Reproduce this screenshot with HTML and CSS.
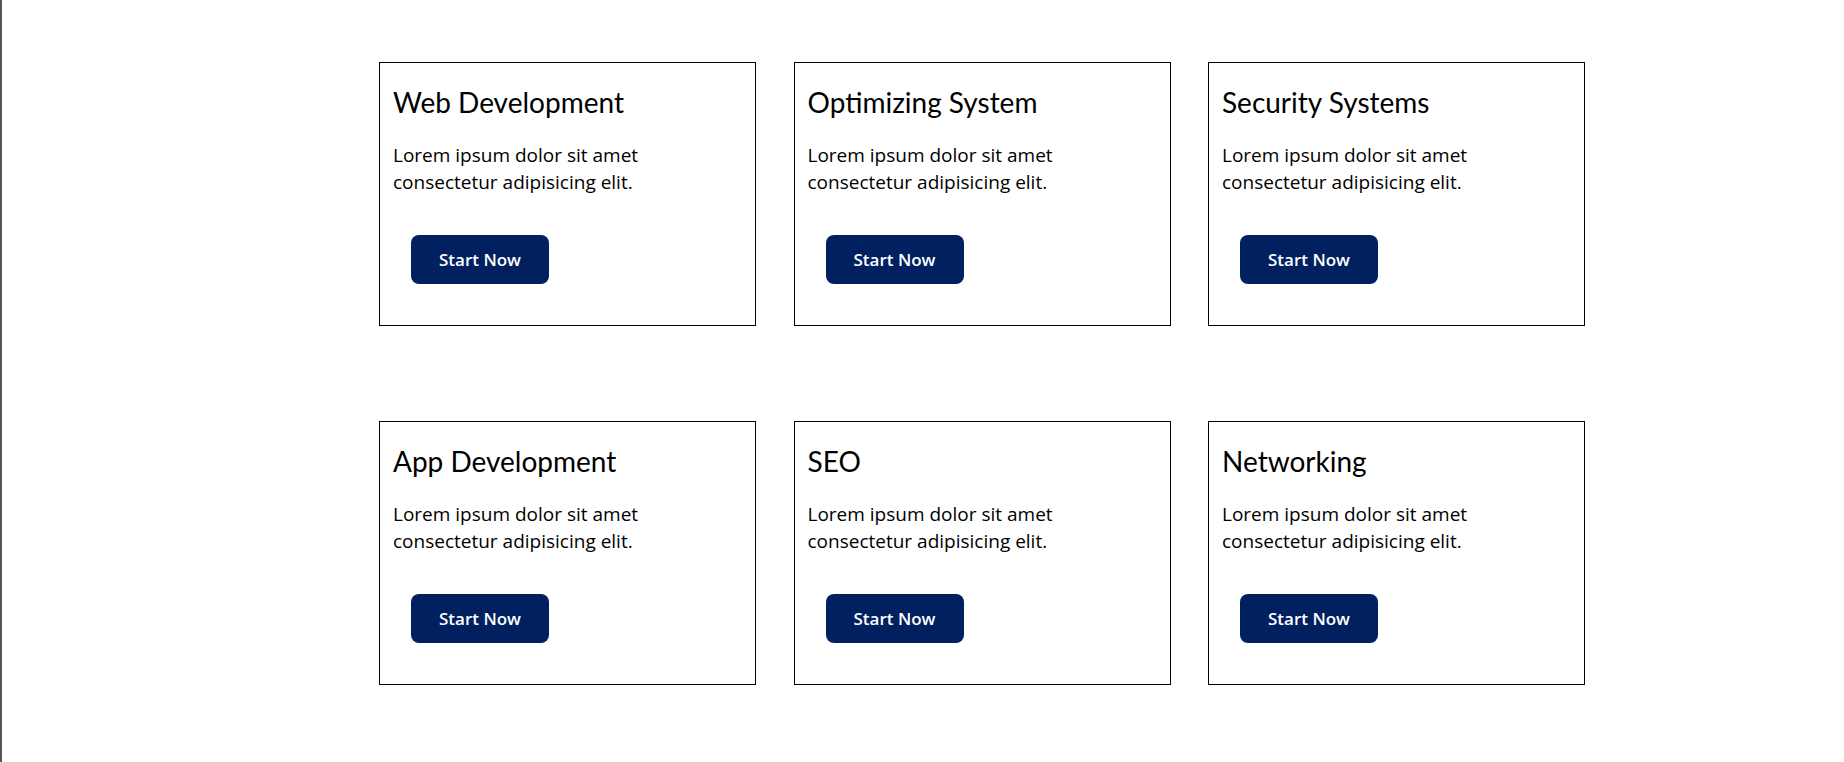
FILE: index.html
```html
<!DOCTYPE html>
<html>
<head>
<meta charset="utf-8">
<link rel="stylesheet" href="styles.css">
</head>
<body>
<div class="page">
  <div class="grid">
    <div class="card">
      <h2 class="card-title">Web Development</h2>
      <p class="card-text">Lorem ipsum dolor sit amet consectetur adipisicing elit.</p>
      <button class="btn">Start Now</button>
    </div>
    <div class="card">
      <h2 class="card-title">Optimizing System</h2>
      <p class="card-text">Lorem ipsum dolor sit amet consectetur adipisicing elit.</p>
      <button class="btn">Start Now</button>
    </div>
    <div class="card">
      <h2 class="card-title">Security Systems</h2>
      <p class="card-text">Lorem ipsum dolor sit amet consectetur adipisicing elit.</p>
      <button class="btn">Start Now</button>
    </div>
    <div class="card">
      <h2 class="card-title">App Development</h2>
      <p class="card-text">Lorem ipsum dolor sit amet consectetur adipisicing elit.</p>
      <button class="btn">Start Now</button>
    </div>
    <div class="card">
      <h2 class="card-title">SEO</h2>
      <p class="card-text">Lorem ipsum dolor sit amet consectetur adipisicing elit.</p>
      <button class="btn">Start Now</button>
    </div>
    <div class="card">
      <h2 class="card-title">Networking</h2>
      <p class="card-text">Lorem ipsum dolor sit amet consectetur adipisicing elit.</p>
      <button class="btn">Start Now</button>
    </div>
  </div>
</div>
</body>
</html>
```
FILE: styles.css
```css
html, body {
  margin: 0;
  padding: 0;
  background: #ffffff;
}
.page {
  min-height: 762px;
  border-left: 2px solid #555555;
  box-sizing: border-box;
  padding: 62px 0 0 377px;
}
.grid {
  display: grid;
  grid-template-columns: repeat(3, 377px);
  column-gap: 37.5px;
  row-gap: 95px;
}
.card {
  border: 1px solid #000;
  height: 264px;
  box-sizing: border-box;
  padding: 0 13px;
}
.card-title {
  font-family: "Lato", sans-serif;
  font-weight: 400;
  font-size: 28px;
  line-height: 36px;
  margin: 21px 0 0;
  color: #000;
}
.card-text {
  font-family: "Open Sans", sans-serif;
  font-size: 19px;
  line-height: 27px;
  margin: 22px 0 0;
  width: 300px;
  color: #000;
}
.btn {
  display: block;
  margin: 39px 0 0 18px;
  width: 138px;
  height: 49px;
  border: none;
  border-radius: 8px;
  background: #002060;
  color: #fff;
  font-family: "Open Sans", sans-serif;
  font-weight: 600;
  font-size: 17px;
}
```
